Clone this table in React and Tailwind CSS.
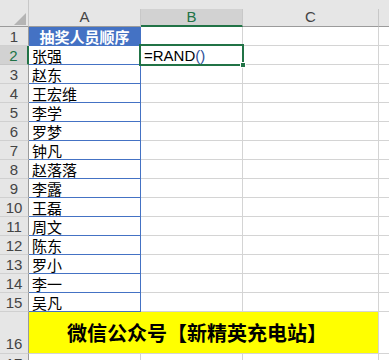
const names = ['张强', '赵东', '王宏维', '李学', '罗梦', '钟凡', '赵落落', '李露', '王磊', '周文', '陈东', '罗小', '李一', '吴凡'];

const font = { fontFamily: '"Noto Sans CJK SC", "Liberation Sans", sans-serif' };
const latin = { fontFamily: '"Liberation Sans", sans-serif' };

function RowHead({ n, active, bottom }) {
  return (
    <div
      className={`flex w-[29px] shrink-0 justify-center border-b border-r text-[15px] leading-none ${
        bottom ? 'items-end pb-[2px]' : 'items-center'
      } ${active ? 'border-r-2 border-b-[#c6c6c6] border-r-[#217346] bg-[#d2d2d2] text-[#217346]' : 'border-b-[#d0d0d0] border-r-[#9b9b9b] bg-[#e6e6e6] text-[#444]'}`}
      style={latin}
    >
      {n}
    </div>
  );
}

function Rest() {
  return (
    <>
      <div className="w-[102px] shrink-0 border-b border-r border-[#d4d4d4]" />
      <div className="w-[136px] shrink-0 border-b border-r border-[#d4d4d4]" />
      <div className="flex-1 border-b border-[#d4d4d4]" />
    </>
  );
}

export default function App() {
  return (
    <div className="relative h-[360px] w-[389px] overflow-hidden bg-white text-black" style={font}>
      {/* column headers */}
      <div className="flex h-[27px] bg-[#e6e6e6]">
        <div className="flex w-[29px] shrink-0 items-end justify-end border-b border-r border-[#9b9b9b] border-r-[#c8c8c8] pb-[1px] pr-[2px]">
          <svg width="12" height="12" viewBox="0 0 12 12">
            <polygon points="12,0 12,12 0,12" fill="#b4b4b4" />
          </svg>
        </div>
        <div className="mt-[9px] flex w-[112px] shrink-0 items-center justify-center border-b border-r border-b-[#9b9b9b] border-r-[#c8c8c8] text-[15px] text-[#444]" style={latin}>
          A
        </div>
        <div className="mt-[9px] flex w-[102px] shrink-0 items-center justify-center border-b-2 border-r border-b-[#217346] border-r-[#c8c8c8] bg-[#d2d2d2] text-[15px] text-[#217346]" style={latin}>
          B
        </div>
        <div className="mt-[9px] flex w-[136px] shrink-0 items-center justify-center border-b border-r border-b-[#9b9b9b] border-r-[#c8c8c8] text-[15px] text-[#444]" style={latin}>
          C
        </div>
        <div className="mt-[9px] flex-1 border-b border-[#9b9b9b]" />
      </div>

      {/* row 1 */}
      <div className="flex h-[19px]">
        <RowHead n={1} />
        <div className="flex w-[112px] shrink-0 items-center justify-center border-b border-r border-[#4472c4] bg-[#4472c4] text-[15px] font-bold leading-none text-white">
          抽奖人员顺序
        </div>
        <Rest />
      </div>

      {/* row 2 */}
      <div className="flex h-[19px]">
        <RowHead n={2} active />
        <div className="flex w-[112px] shrink-0 items-center border-b border-r border-[#4472c4] pl-[3px] text-[15px] leading-none">
          {names[0]}
        </div>
        <div className="flex w-[102px] shrink-0 items-center border-b border-r border-[#d4d4d4] pl-[3px] text-[15px] leading-none" style={latin}>
          =RAND<span className="text-[#2e4f99]">()</span>
        </div>
        <div className="w-[136px] shrink-0 border-b border-r border-[#d4d4d4]" />
        <div className="flex-1 border-b border-[#d4d4d4]" />
      </div>

      {names.slice(1).map((name, i) => (
        <div key={name + i} className="flex h-[19px]">
          <RowHead n={i + 3} />
          <div className="flex w-[112px] shrink-0 items-center border-b border-r border-[#4472c4] pl-[3px] text-[15px] leading-none">
            {name}
          </div>
          <Rest />
        </div>
      ))}

      {/* row 16 */}
      <div className="flex h-[42px]">
        <RowHead n={16} bottom />
        <div className="flex w-[350px] shrink-0 items-center border-b border-r border-[#d4d4d4] bg-[#ffff00] pl-[38px] text-[20px] font-bold leading-none">
          微信公众号【新精英充电站】
        </div>
        <div className="flex-1 border-b border-[#d4d4d4]" />
      </div>

      {/* row 17 */}
      <div className="flex h-[19px]">
        <RowHead n={17} />
        <div className="w-[112px] shrink-0 border-b border-r border-[#d4d4d4]" />
        <Rest />
      </div>

      {/* selection on B2 */}
      <div className="absolute left-[139px] top-[44px] h-[22px] w-[105px] border-2 border-[#217346]" />
      <div className="absolute left-[240px] top-[62px] h-[6px] w-[6px] border border-white bg-[#217346]" />
    </div>
  );
}
